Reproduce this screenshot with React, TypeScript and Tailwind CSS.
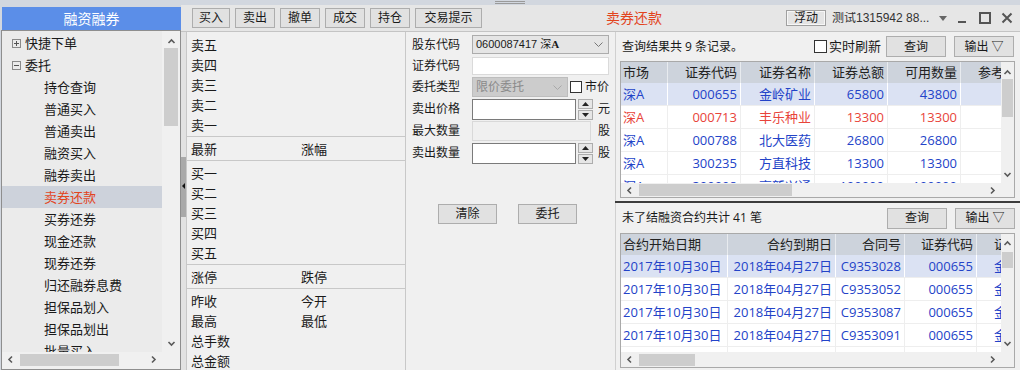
import React from "react";

type Dir = "up" | "down" | "left" | "right";

function Arrow({ dir, color = "#5a5a5a" }: { dir: Dir; color?: string }) {
  const pts = {
    up: "1.5,6 4.5,3 7.5,6",
    down: "1.5,3 4.5,6 7.5,3",
    left: "6,1.5 3,4.5 6,7.5",
    right: "3,1.5 6,4.5 3,7.5",
  }[dir];
  return (
    <svg width="9" height="9" viewBox="0 0 9 9">
      <polyline points={pts} fill="none" stroke={color} strokeWidth="1.6" />
    </svg>
  );
}

function VScroll({ up, thumb, down }: { up: string; thumb: string; down: string }) {
  return (
    <div className="flex h-full flex-col bg-[#f0f0f0]">
      <div className={`flex items-center justify-center ${up}`}>
        <Arrow dir="up" />
      </div>
      <div className={`mx-px bg-[#cdcdcd] ${thumb}`} />
      <div className="flex-1" />
      <div className={`flex items-center justify-center ${down}`}>
        <Arrow dir="down" />
      </div>
    </div>
  );
}

function HScroll({ thumb }: { thumb: string }) {
  return (
    <div className="flex h-full bg-[#f0f0f0]">
      <div className="flex w-[17px] shrink-0 items-center justify-center">
        <Arrow dir="left" />
      </div>
      <div className="flex flex-1 items-center pl-px">
        <div className={`h-[12px] bg-[#cdcdcd] ${thumb}`} />
      </div>
      <div className="flex w-[17px] shrink-0 items-center justify-center">
        <Arrow dir="right" />
      </div>
    </div>
  );
}

function TreeBox({ open }: { open: boolean }) {
  return (
    <svg width="9" height="9" viewBox="0 0 9 9">
      <rect x="0.5" y="0.5" width="8" height="8" fill="none" stroke="#8a8a8a" />
      <line x1="2" y1="4.5" x2="7" y2="4.5" stroke="#555" />
      {!open && <line x1="4.5" y1="2" x2="4.5" y2="7" stroke="#555" />}
    </svg>
  );
}

const treeItems = [
  "持仓查询",
  "普通买入",
  "普通卖出",
  "融资买入",
  "融券卖出",
  "卖券还款",
  "买券还券",
  "现金还款",
  "现券还券",
  "归还融券息费",
  "担保品划入",
  "担保品划出",
  "批量买入",
];

function Sidebar() {
  return (
    <aside className="flex w-[181px] shrink-0 flex-col pt-[2px]">
      <div className="ml-[2px] flex h-[23px] shrink-0 items-center justify-center bg-[#5b8ee8] text-[14px] text-white">
        融资融券
      </div>
      <div className="ml-px flex min-h-0 flex-1 flex-col border border-[#8e8e8e] bg-[#f0f0f0]">
        <div className="flex h-[321px] shrink-0">
          <ul className="w-[160px] overflow-hidden bg-[#ebebeb] pt-px">
            <li className="flex h-[22px] items-center gap-[4px] pl-[10px]">
              <TreeBox open={false} />
              <span>快捷下单</span>
            </li>
            <li className="flex h-[22px] items-center gap-[4px] pl-[10px]">
              <TreeBox open />
              <span>委托</span>
            </li>
            {treeItems.map((t) => (
              <li
                key={t}
                className={`flex h-[22px] items-center pl-[42px] ${
                  t === "卖券还款" ? "bg-[#cdd2db] text-[#e2441d]" : ""
                }`}
              >
                {t}
              </li>
            ))}
          </ul>
          <div className="ml-px w-[16px]">
            <VScroll up="h-[17px] pt-[3px]" thumb="h-[78px]" down="h-[17px]" />
          </div>
        </div>
        <div className="flex h-[15px] shrink-0">
          <div className="w-[160px]">
            <HScroll thumb="w-[99px]" />
          </div>
        </div>
      </div>
    </aside>
  );
}

const toolButtons = [
  { t: "买入", w: "w-[38px]" },
  { t: "卖出", w: "w-[40px]" },
  { t: "撤单", w: "w-[40px]" },
  { t: "成交", w: "w-[40px]" },
  { t: "持仓", w: "w-[40px]" },
  { t: "交易提示", w: "w-[67px]" },
];

function Toolbar() {
  return (
    <div className="flex h-[27px] shrink-0 items-center border-b border-[#c4c4c4] bg-[#e6e6e6] pl-[11px] pr-[2px]">
      <div className="flex gap-[5px]">
        {toolButtons.map((b) => (
          <button
            key={b.t}
            className={`${b.w} flex h-[20px] items-center justify-center border border-[#adadad] bg-[#e1e1e1] text-[12px]`}
          >
            {b.t}
          </button>
        ))}
      </div>
      <div className="ml-[124px] text-[14px] text-[#e2441d]">卖券还款</div>
      <div className="ml-auto flex items-center">
        <button className="flex h-[16px] w-[40px] items-center justify-center border border-[#a0a0a0] bg-[#e4e4e4] text-[12px] shadow-[inset_0_0_0_1px_#f7f7f7]">
          浮动
        </button>
        <div className="ml-[6px] w-[104px] overflow-hidden whitespace-nowrap font-['Liberation_Sans','Noto_Sans_CJK_SC',sans-serif] text-[12px] text-[#333]">
          测试1315942 88...
        </div>
        <div className="flex w-[14px] justify-center">
          <svg width="8" height="5" viewBox="0 0 8 5">
            <polygon points="0,0 8,0 4,5" fill="#666" />
          </svg>
        </div>
        <div className="ml-px flex h-[22px] w-[22px] items-center justify-center">
          <svg width="12" height="12" viewBox="0 0 12 12">
            <rect x="2" y="9" width="8" height="2" fill="#555" />
          </svg>
        </div>
        <div className="ml-px flex h-[22px] w-[22px] items-center justify-center">
          <svg width="12" height="12" viewBox="0 0 12 12">
            <rect x="1" y="1" width="10" height="10" fill="none" stroke="#555" strokeWidth="2" />
          </svg>
        </div>
        <div className="flex h-[22px] w-[22px] items-center justify-center">
          <svg width="12" height="12" viewBox="0 0 12 12">
            <path d="M1.5 1.5 L10.5 10.5 M10.5 1.5 L1.5 10.5" stroke="#555" strokeWidth="2" />
          </svg>
        </div>
      </div>
    </div>
  );
}

function Splitter() {
  return (
    <div className="w-[5px] shrink-0 bg-[#e2e2e2]">
      <div className="mt-[125px] flex h-[60px] items-center justify-center bg-[#a9a9a9] pb-[2px]">
        <svg width="3" height="6" viewBox="0 0 3 6">
          <polygon points="3,0 3,6 0,3" fill="#111" />
        </svg>
      </div>
    </div>
  );
}

const quoteSections: string[][][] = [
  [["卖五"], ["卖四"], ["卖三"], ["卖二"], ["卖一"]],
  [["最新", "涨幅"]],
  [["买一"], ["买二"], ["买三"], ["买四"], ["买五"]],
  [["涨停", "跌停"]],
  [["昨收", "今开"], ["最高", "最低"], ["总手数"], ["总金额"]],
];

function QuotePanel() {
  return (
    <div className="w-[220px] shrink-0 overflow-hidden border-x border-[#c8c8c8] bg-[#f0f0f0]">
      {quoteSections.map((sec, si) => (
        <div
          key={si}
          className={`${si === 0 ? "pt-[3px]" : "pt-[2px]"} pb-px ${
            si < quoteSections.length - 1 ? "border-b border-[#c8c8c8]" : ""
          }`}
        >
          {sec.map((row, ri) => (
            <div key={ri} className="flex h-[20px] items-center pl-[4px]">
              <span className="w-[110px]">{row[0]}</span>
              {row[1] && <span>{row[1]}</span>}
            </div>
          ))}
        </div>
      ))}
    </div>
  );
}

function Spinner() {
  return (
    <div className="ml-[2px] flex w-[15px] flex-col gap-px">
      <div className="flex h-[10px] items-center justify-center border border-[#adadad] bg-[#e6e6e6]">
        <svg width="7" height="4" viewBox="0 0 7 4">
          <polygon points="0,4 7,4 3.5,0" fill="#222" />
        </svg>
      </div>
      <div className="flex h-[10px] items-center justify-center border border-[#adadad] bg-[#e6e6e6]">
        <svg width="7" height="4" viewBox="0 0 7 4">
          <polygon points="0,0 7,0 3.5,4" fill="#222" />
        </svg>
      </div>
    </div>
  );
}

function SelectChevron({ color }: { color: string }) {
  return (
    <svg width="9" height="5" viewBox="0 0 9 5">
      <polyline points="0.5,0.5 4.5,4.5 8.5,0.5" fill="none" stroke={color} strokeWidth="1" />
    </svg>
  );
}

function OrderForm() {
  return (
    <div className="w-[209px] shrink-0 bg-[#f0f0f0] pl-[6px] pt-[2px] text-[12px]">
      <div className="flex h-[21px] items-center">
        <span className="w-[60px]">股东代码</span>
        <div className="flex h-[19px] w-[137px] items-center justify-between border border-[#acacac] bg-[#e5e5e5] pl-[3px] pr-[5px] font-['Liberation_Sans','Noto_Sans_CJK_SC',sans-serif] text-[11px]">
          <span>
            0600087417 深<b className="font-['Liberation_Serif',serif] font-bold">A</b>
          </span>
          <SelectChevron color="#777" />
        </div>
      </div>
      <div className="flex h-[21px] items-center">
        <span className="w-[60px]">证券代码</span>
        <div className="h-[18px] w-[137px] border border-[#dadada] bg-white" />
      </div>
      <div className="flex h-[22px] items-center">
        <span className="w-[60px]">委托类型</span>
        <div className="flex h-[20px] w-[96px] items-center justify-between border border-[#bdbdbd] bg-[#cccccc] pl-[3px] pr-[5px] text-[#8a8a8a]">
          <span>限价委托</span>
          <SelectChevron color="#a8a8a8" />
        </div>
        <div className="ml-[2px] h-[12px] w-[12px] border border-[#333] bg-white" />
        <span className="ml-[3px]">市价</span>
      </div>
      <div className="flex h-[22px] items-center">
        <span className="w-[60px]">卖出价格</span>
        <div className="h-[21px] w-[104px] border border-[#7a7a7a] bg-white" />
        <Spinner />
        <span className="ml-[5px]">元</span>
      </div>
      <div className="flex h-[22px] items-center">
        <span className="w-[60px]">最大数量</span>
        <div className="h-[20px] w-[119px] border border-[#d9d9d9] bg-[#f0f0f0]" />
        <span className="ml-[7px]">股</span>
      </div>
      <div className="flex h-[22px] items-center">
        <span className="w-[60px]">卖出数量</span>
        <div className="h-[21px] w-[104px] border border-[#7a7a7a] bg-white" />
        <Spinner />
        <span className="ml-[5px]">股</span>
      </div>
      <div className="mt-[40px] flex gap-[21px] pl-[26px]">
        <button className="flex h-[20px] w-[59px] items-center justify-center border border-[#adadad] bg-[#e1e1e1]">
          清除
        </button>
        <button className="flex h-[20px] w-[59px] items-center justify-center border border-[#adadad] bg-[#e1e1e1]">
          委托
        </button>
      </div>
    </div>
  );
}

type Col = { w: string; left?: boolean };
type Row = { cells: string[]; color: string; sel?: boolean };

function Grid({ cols, head, rows }: { cols: Col[]; head: string[]; rows: Row[] }) {
  return (
    <div className="min-w-0 flex-1 overflow-hidden bg-white">
      <div className="flex h-[21px] bg-[#cdd3dc] text-[#222]">
        {head.map((h, i) => (
          <div
            key={i}
            className={`${cols[i].w} flex shrink-0 items-center whitespace-nowrap border-r border-[#e8ebef] ${
              cols[i].left ? "justify-start pl-[2px]" : "justify-end pr-[3px]"
            }`}
          >
            {h}
          </div>
        ))}
      </div>
      {rows.map((r, ri) => (
        <div
          key={ri}
          className={`flex h-[23px] border-b border-[#eeeeee] ${r.sel ? "bg-[#dbe2f3]" : "bg-white"} ${r.color}`}
        >
          {r.cells.map((c, ci) => (
            <div
              key={ci}
              className={`${cols[ci].w} flex shrink-0 items-center whitespace-nowrap border-r ${
                r.sel ? "border-white" : "border-[#eeeeee]"
              } ${cols[ci].left ? "justify-start pl-[2px]" : "justify-end pr-[3px]"}`}
            >
              {c}
            </div>
          ))}
        </div>
      ))}
    </div>
  );
}

const BLUE = "text-[#2343c8]";
const RED = "text-[#e8443a]";

const holdCols: Col[] = [
  { w: "w-[47px]", left: true },
  { w: "w-[73px]" },
  { w: "w-[74px]" },
  { w: "w-[73px]" },
  { w: "w-[73px]" },
  { w: "w-[73px]" },
];

const holdRows: Row[] = [
  { cells: ["深A", "000655", "金岭矿业", "65800", "43800", ""], color: BLUE, sel: true },
  { cells: ["深A", "000713", "丰乐种业", "13300", "13300", ""], color: RED },
  { cells: ["深A", "000788", "北大医药", "26800", "26800", ""], color: BLUE },
  { cells: ["深A", "300235", "方直科技", "13300", "13300", ""], color: BLUE },
  { cells: ["深A", "300098", "高新兴通", "100000", "100000", ""], color: BLUE },
];

const contractCols: Col[] = [
  { w: "w-[107px]", left: true },
  { w: "w-[108px]" },
  { w: "w-[69px]" },
  { w: "w-[72px]" },
  { w: "w-[73px]" },
];

const contractRows: Row[] = ["C9353028", "C9353052", "C9353087", "C9353091", "C9353102"].map((id, i) => ({
  cells: ["2017年10月30日", "2018年04月27日", id, "000655", "金岭矿业"],
  color: BLUE,
  sel: i === 0,
}));

function SmallButton({ children }: { children: React.ReactNode }) {
  return (
    <button className="flex h-[21px] w-[60px] items-center justify-center border border-[#adadad] bg-[#e1e1e1] text-[12px]">
      {children}
    </button>
  );
}

function RightPanel() {
  return (
    <div className="flex w-[405px] shrink-0 flex-col bg-[#f0f0f0]">
      <div className="h-[169px] shrink-0 border-l border-[#d0d0d0] pl-[4px] pr-[5px]">
        <div className="flex h-[29px] items-center text-[12px]">
          <span className="pl-[2px]">查询结果共 9 条记录。</span>
          <div className="ml-auto flex items-center">
            <div className="h-[13px] w-[13px] border border-[#333] bg-white" />
            <span className="ml-[2px] text-[13px]">实时刷新</span>
            <div className="ml-[5px]">
              <SmallButton>查询</SmallButton>
            </div>
            <div className="ml-[8px] mr-px">
              <SmallButton>输出 ▽</SmallButton>
            </div>
          </div>
        </div>
        <div className="flex h-[137px] flex-col border border-[#a9a9a9]">
          <div className="flex h-[121px] shrink-0">
            <Grid
              cols={holdCols}
              head={["市场", "证券代码", "证券名称", "证券总额", "可用数量", "参考市值"]}
              rows={holdRows}
            />
            <div className="w-[13px] shrink-0">
              <VScroll up="h-[17px] pt-[3px]" thumb="h-[38px]" down="h-[17px]" />
            </div>
          </div>
          <div className="flex h-[14px] shrink-0">
            <div className="flex-1">
              <HScroll thumb="w-[153px]" />
            </div>
            <div className="w-[13px] bg-[#f0f0f0]" />
          </div>
        </div>
      </div>
      <div className="h-[2px] shrink-0 bg-[#3c3c3c]" />
      <div className="flex min-h-0 flex-1 flex-col border-l border-[#d0d0d0] pl-[4px] pr-[5px]">
        <div className="flex h-[30px] shrink-0 items-center text-[12px]">
          <span className="pl-[2px]">未了结融资合约共计 41 笔</span>
          <div className="ml-auto flex items-center">
            <SmallButton>查询</SmallButton>
            <div className="ml-[8px]">
              <SmallButton>输出 ▽</SmallButton>
            </div>
          </div>
        </div>
        <div className="flex h-[135px] shrink-0 flex-col border border-[#a9a9a9]">
          <div className="flex h-[118px] shrink-0">
            <Grid
              cols={contractCols}
              head={["合约开始日期", "合约到期日", "合同号", "证券代码", "证券名称"]}
              rows={contractRows}
            />
            <div className="w-[13px] shrink-0">
              <VScroll up="h-[18px]" thumb="h-[16px]" down="h-[17px]" />
            </div>
          </div>
          <div className="flex h-[15px] shrink-0">
            <div className="flex-1">
              <HScroll thumb="w-[56px]" />
            </div>
            <div className="w-[13px] bg-[#f0f0f0]" />
          </div>
        </div>
      </div>
    </div>
  );
}

export default function App() {
  return (
    <div className="flex h-[370px] w-[1020px] flex-col overflow-hidden bg-[#d2d7df] font-['Open_Sans','Noto_Sans_CJK_SC',sans-serif] text-[13px] leading-none text-[#1a1a1a]">
      <div className="flex h-[5px] shrink-0 flex-col items-center justify-center gap-px">
        <div className="h-px w-[30px] bg-[#9a9a9a]" />
        <div className="h-px w-[30px] bg-[#9a9a9a]" />
      </div>
      <div className="flex min-h-0 flex-1">
        <Sidebar />
        <div className="flex min-w-0 flex-1 flex-col bg-[#f0f0f0]">
          <Toolbar />
          <div className="flex min-h-0 flex-1">
            <Splitter />
            <QuotePanel />
            <OrderForm />
            <RightPanel />
          </div>
        </div>
      </div>
    </div>
  );
}
